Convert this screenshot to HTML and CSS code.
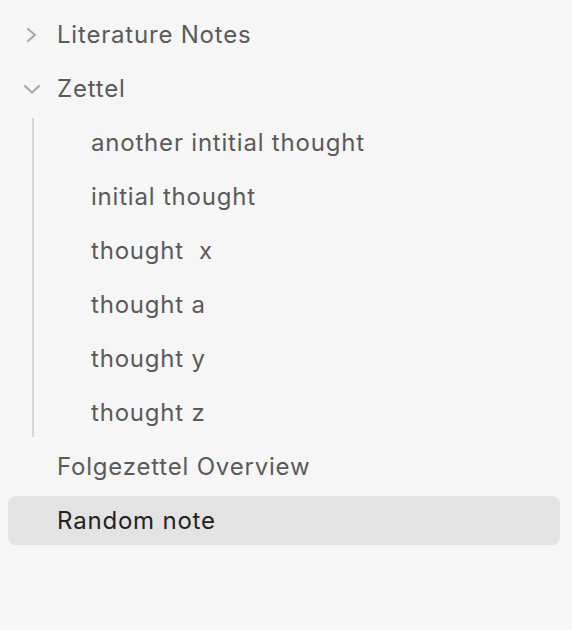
FILE: index.html
```html
<!DOCTYPE html>
<html>

<head>
    <meta charset="UTF-8">
    <link rel="stylesheet" href="styles.css">
    <title>Files</title>
</head>

<body>

    <div class="tree">
        <div class="item">
            <span class="chevron">
                <svg width="14" height="16" viewBox="0 0 14 16"><path d="M3 2 L10 8 L3 14" fill="none" stroke="#a8a8a8" stroke-width="2.2" stroke-linecap="round" stroke-linejoin="round"/></svg>
            </span>
            <span class="label">Literature Notes</span>
        </div>

        <div class="item">
            <span class="chevron">
                <svg width="18" height="12" viewBox="0 0 18 12"><path d="M2 3 L9 9.5 L16 3" fill="none" stroke="#a8a8a8" stroke-width="2.2" stroke-linecap="round" stroke-linejoin="round"/></svg>
            </span>
            <span class="label">Zettel</span>
        </div>

        <div class="children">
            <div class="item"><span class="label">another intitial thought</span></div>
            <div class="item"><span class="label">initial thought</span></div>
            <div class="item"><span class="label">thought&nbsp; x</span></div>
            <div class="item"><span class="label">thought a</span></div>
            <div class="item"><span class="label">thought y</span></div>
            <div class="item"><span class="label">thought z</span></div>
        </div>

        <div class="item">
            <span class="chevron"></span>
            <span class="label">Folgezettel Overview</span>
        </div>

        <div class="item active">
            <span class="chevron"></span>
            <span class="label">Random note</span>
        </div>
    </div>

</body>

</html>
```

FILE: styles.css
```css
body {
    margin: 0;
    padding: 0;
    background-color: #f6f6f6;
    font-family: Inter, "Noto Sans", sans-serif;
}

.tree {
    padding: 10px 12px 0 8px;
}

.item {
    display: flex;
    align-items: center;
    height: 49px;
    margin-bottom: 5px;
    border-radius: 8px;
    color: #5a5a5a;
    font-size: 24px;
    letter-spacing: 0.8px;
}

.chevron {
    width: 49px;
    display: flex;
    justify-content: center;
}

.item .chevron svg {
    margin-left: -2px;
}

.label {
    white-space: nowrap;
}

.children {
    margin-left: 24px;
    border-left: 2px solid #d6d6d6;
    padding-left: 57px;
}

.active {
    background-color: #e3e3e3;
    color: #222;
}
```
